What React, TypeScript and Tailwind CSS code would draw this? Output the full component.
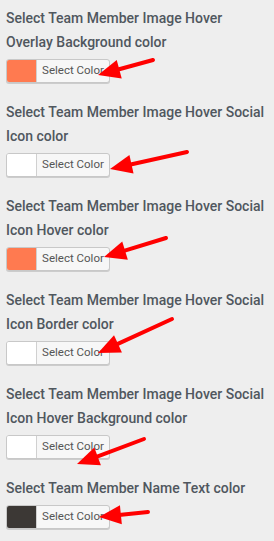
import React from 'react';

const settings = [
  { label: 'Select Team Member Image Hover Overlay Background color', color: '#ff7a50' },
  { label: 'Select Team Member Image Hover Social Icon color', color: '#ffffff' },
  { label: 'Select Team Member Image Hover Social Icon Hover color', color: '#ff7a50' },
  { label: 'Select Team Member Image Hover Social Icon Border color', color: '#ffffff' },
  { label: 'Select Team Member Image Hover Social Icon Hover Background color', color: '#ffffff' },
  { label: 'Select Team Member Name Text color', color: '#3c3835' },
];

// tail -> tip, in page pixels
const arrows = [
  { x1: 153, y1: 60, x2: 98, y2: 75 },
  { x1: 187, y1: 152, x2: 110, y2: 169 },
  { x1: 166, y1: 238, x2: 104, y2: 257 },
  { x1: 172, y1: 319, x2: 98, y2: 353 },
  { x1: 144, y1: 439, x2: 77, y2: 464 },
  { x1: 148, y1: 512, x2: 99, y2: 517 },
];

function Arrow({ x1, y1, x2, y2 }: { x1: number; y1: number; x2: number; y2: number }) {
  const dx = x2 - x1;
  const dy = y2 - y1;
  const len = Math.hypot(dx, dy);
  const ux = dx / len;
  const uy = dy / len;
  const headLen = 22;
  const half = 9.5;
  const bx = x2 - ux * headLen;
  const by = y2 - uy * headLen;
  const pts = `${x2},${y2} ${bx - uy * half},${by + ux * half} ${bx + uy * half},${by - ux * half}`;
  return (
    <g>
      <line x1={x1} y1={y1} x2={bx + ux * 2} y2={by + uy * 2} stroke="#ff0000" strokeWidth={4} strokeLinecap="round" />
      <polygon points={pts} fill="#ff0000" />
    </g>
  );
}

function ColorButton({ color }: { color: string }) {
  return (
    <button className="flex h-[24px] w-[104px] items-stretch overflow-hidden rounded-[3px] border border-[#c8c8c8] bg-[#f7f7f7] p-0 shadow-[0_1px_0_#cccccc]">
      <span className="w-[30px] border-r border-[#d0d0d0]" style={{ backgroundColor: color }} />
      <span className="flex flex-1 items-center justify-center text-[11.5px] text-[#555555]">Select Color</span>
    </button>
  );
}

export default function App() {
  return (
    <div className="relative h-[541px] w-[274px] overflow-hidden bg-[#eeeeee] pl-[6px] pr-[8px] pt-[6px] font-['Roboto',_'Liberation_Sans',_sans-serif]">
      {settings.map((s) => (
        <div key={s.label} className="mb-[17px]">
          <div className="text-[14px] font-medium leading-[24px] text-[#50575e]">{s.label}</div>
          <div className="mt-[5px]">
            <ColorButton color={s.color} />
          </div>
        </div>
      ))}
      <svg className="pointer-events-none absolute left-0 top-0" width={274} height={541}>
        {arrows.map((a, i) => (
          <Arrow key={i} {...a} />
        ))}
      </svg>
    </div>
  );
}
